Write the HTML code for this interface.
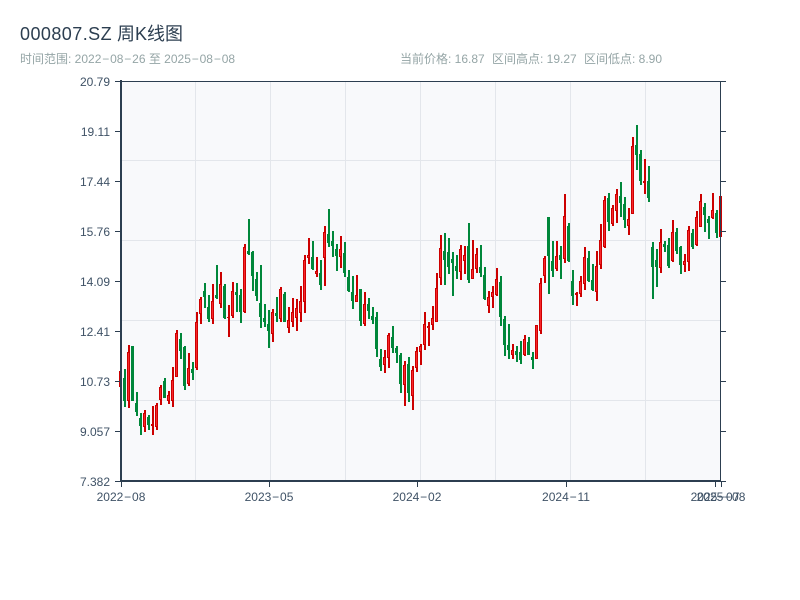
<!DOCTYPE html>
<html lang="zh">
<head>
<meta charset="utf-8">
<title>000807.SZ 周K线图</title>
<style>
html,body{margin:0;padding:0;background:#fff;width:800px;height:600px;overflow:hidden}
svg{display:block;position:absolute;left:0;top:0}
text{font-family:"Liberation Sans","WenQuanYi Zen Hei","Noto Sans CJK SC",sans-serif}
</style>
</head>
<body>
<svg width="800" height="600" viewBox="0 0 800 600" xmlns="http://www.w3.org/2000/svg">
<rect x="121" y="81" width="600" height="400" fill="#f8f9fb"/>
<path d="M195.5 81V481M270.5 81V481M345.5 81V481M420.5 81V481M495.5 81V481M570.5 81V481M645.5 81V481M121 160.5H721M121 240.5H721M121 320.5H721M121 400.5H721" stroke="#e3e6eb" stroke-width="1" fill="none"/>
<g transform="translate(.3,0)" fill="none">
<path stroke="#00873a" stroke-width="2" d="M124.7 369V407M132.7 346V401M136.7 392V416M140.7 413V435M148.7 415V430M164.7 378V398M180.7 333V359M184.7 346V390M192.7 362V380M204.7 283V308M208.7 295V322M216.7 265V299M224.7 284V319M236.7 283V312M240.7 289V323M248.7 219V255M252.7 251V291M256.7 272V301M260.7 265V328M264.7 304V327M268.7 310V348M276.7 297V322M284.7 292V322M312.7 241V270M320.7 260V290M328.7 209V247M332.7 231V257M336.7 244V271M344.7 242V277M348.7 270V292M352.7 276V309M360.7 289V326M368.7 298V319M372.7 307V324M376.7 312V357M380.7 349V371M392.7 326V353M396.7 346V363M400.7 353V393M408.7 357V402M444.7 233V285M448.7 238V274M452.7 252V296M456.7 255V279M468.7 223V283M480.7 245V277M484.7 267V300M500.7 276V326M504.7 316V356M508.7 324V359M516.7 346V362M520.7 341V364M528.7 337V355M532.7 352V369M548.7 217V294M552.7 241V277M560.7 246V279M568.7 223V262M572.7 270V305M588.7 251V282M592.7 264V291M608.7 193V231M620.7 182V217M624.7 197V228M636.7 125V170M640.7 150V185M648.7 166V202M652.7 242V299M656.7 249V287M664.7 241V252M668.7 238V268M676.7 228V254M680.7 246V274M692.7 229V249M704.7 203V232M708.7 216V239M716.7 210V238"/>
<path stroke="#cc0000" stroke-width="2" d="M119.7 371V387M128.7 345V408M144.7 410V432M152.7 406V435M156.7 403V430M160.7 385V405M168.7 391V404M172.7 367V407M176.7 330V377M188.7 353V386M196.7 312V370M200.7 297V324M212.7 284V324M220.7 272V308M228.7 305V337M232.7 282V318M244.7 244V313M272.7 309V342M280.7 287V322M288.7 307V333M292.7 298V327M296.7 299V331M300.7 286V322M304.7 255V313M308.7 238V264M316.7 257V277M324.7 226V286M340.7 236V268M356.7 275V302M364.7 292V326M384.7 350V373M388.7 333V368M404.7 361V406M412.7 366V410M416.7 347V372M420.7 344V365M424.7 312V350M428.7 322V346M432.7 306V330M436.7 273V322M440.7 235V285M460.7 245V280M464.7 246V274M472.7 240V279M476.7 248V273M488.7 291V313M492.7 286V308M496.7 268V296M512.7 344V359M524.7 335V356M536.7 325V359M540.7 278V334M544.7 256V283M556.7 241V271M564.7 194V263M576.7 292V306M580.7 276V297M584.7 247V290M596.7 251V301M600.7 224V269M604.7 196V248M612.7 205V226M616.7 189V223M628.7 208V235M632.7 137V214M644.7 159V194M660.7 229V273M672.7 220V262M684.7 254V272M688.7 226V271M696.7 211V246M700.7 194V227M712.7 193V219M720.7 196V237"/>
</g>
<g transform="translate(-.2,0)" fill="none">
<path stroke="#00873a" stroke-width="3" d="M124.7 378V401M132.7 346V401M136.7 403V412M140.7 418V426M148.7 417V425M164.7 381V398M180.7 339V351M184.7 347V386M192.7 369V373M204.7 291V297M208.7 307V319M216.7 295V298M224.7 286V318M236.7 292V295M240.7 295V312M248.7 251V254M252.7 252V276M256.7 279V296M260.7 303V317M264.7 318V322M268.7 324V331M276.7 313V316M284.7 294V322M312.7 257V269M320.7 273V285M328.7 234V243M332.7 241V246M336.7 249V256M344.7 253V273M348.7 277V291M352.7 292V301M360.7 289V321M368.7 304V311M372.7 316V320M376.7 317V349M380.7 359V367M392.7 337V348M396.7 348V353M400.7 355V384M408.7 364V393M444.7 251V260M448.7 252V267M452.7 259V263M456.7 266V271M468.7 246V280M480.7 267V273M484.7 275V299M500.7 282V317M504.7 319V345M508.7 345V350M516.7 351V355M520.7 352V360M528.7 342V355M532.7 357V360M548.7 217V256M552.7 261V271M560.7 255V260M568.7 226V261M572.7 281V296M588.7 258V281M592.7 280V290M608.7 198V222M620.7 196V203M624.7 204V220M636.7 145V155M640.7 154V181M648.7 181V198M652.7 247V267M656.7 260V267M664.7 244V247M668.7 245V266M676.7 232V251M680.7 247V265M692.7 233V247M704.7 207V215M708.7 219V223M716.7 213V233"/>
<path stroke="#cc0000" stroke-width="3" d="M128.7 352V401M144.7 413V427M152.7 424V426M156.7 405V427M160.7 387V400M168.7 395V401M172.7 380V401M176.7 333V377M188.7 368V384M196.7 322V368M200.7 299V314M212.7 301V319M220.7 284V304M228.7 317V318M232.7 291V316M244.7 247V312M272.7 312V334M280.7 289V319M288.7 320V328M292.7 312V322M296.7 308V318M300.7 301V313M304.7 260V302M308.7 255V258M316.7 271V274M324.7 232V258M340.7 249V257M356.7 295V302M364.7 304V324M384.7 357V365M388.7 335V358M404.7 365V385M412.7 370V396M416.7 351V368M420.7 346V352M424.7 324V345M428.7 326V328M432.7 318V325M436.7 288V322M440.7 248V278M460.7 249V272M464.7 255V261M472.7 269V279M476.7 254V269M488.7 297V306M492.7 292V297M496.7 279V295M512.7 350V355M524.7 339V355M536.7 325V359M540.7 283V331M544.7 258V276M556.7 256V269M564.7 216V259M576.7 293V295M580.7 281V294M584.7 257V284M596.7 266V292M600.7 240V265M604.7 200V247M612.7 208V224M616.7 194V211M628.7 219V226M632.7 146V214M644.7 181V183M660.7 242V268M672.7 232V261M684.7 261V265M688.7 230V262M696.7 217V245M700.7 201V227M712.7 210V218M720.7 196V237"/>
<path stroke="#f8262b" stroke-width="1" d="M128.7 353V400M144.7 414V426M156.7 406V426M160.7 388V399M168.7 396V400M172.7 381V400M176.7 334V376M188.7 369V383M196.7 323V367M200.7 300V313M212.7 302V318M220.7 285V303M232.7 292V315M244.7 248V311M272.7 313V333M280.7 290V318M288.7 321V327M292.7 313V321M296.7 309V317M300.7 302V312M304.7 261V301M308.7 256V257M316.7 272V273M324.7 233V257M340.7 250V256M356.7 296V301M364.7 305V323M384.7 358V364M388.7 336V357M404.7 366V384M412.7 371V395M416.7 352V367M420.7 347V351M424.7 325V344M428.7 327V327.5M432.7 319V324M436.7 289V321M440.7 249V277M460.7 250V271M464.7 256V260M472.7 270V278M476.7 255V268M488.7 298V305M492.7 293V296M496.7 280V294M512.7 351V354M524.7 340V354M536.7 326V358M540.7 284V330M544.7 259V275M556.7 257V268M564.7 217V258M580.7 282V293M584.7 258V283M596.7 267V291M600.7 241V264M604.7 201V246M612.7 209V223M616.7 195V210M628.7 220V225M632.7 147V213M660.7 243V267M672.7 233V260M684.7 262V264M688.7 231V261M696.7 218V244M700.7 202V226M712.7 211V217"/>
</g>
<g fill="none" stroke="#2c3e50">
<path stroke-width="2" d="M121 80V482M120 481H721"/>
<path stroke-width="1" d="M120 81.5H721M720.5 81V481"/>
<path stroke-width="1" d="M115 81.5H120M115 131.5H120M115 181.5H120M115 231.5H120M115 281.5H120M115 331.5H120M115 381.5H120M115 431.5H120M115 481.5H120"/>
<path stroke-width="1" d="M721 81.5H726M721 131.5H726M721 181.5H726M721 231.5H726M721 281.5H726M721 331.5H726M721 381.5H726M721 431.5H726M721 481.5H726"/>
<path stroke-width="1" d="M121.5 482V487M269.5 482V487M417.5 482V487M566.5 482V487M715.5 482V487M721.5 482V487"/>
</g>
<text x="20" y="40" font-size="18" fill="#2c3e50"><tspan letter-spacing=".44">000807.SZ</tspan> 周K线图</text>
<text x="20" y="63" font-size="12" fill="#95a5a6">时间范围: 2022<tspan dx=".85">−</tspan><tspan dx=".85">08</tspan><tspan dx=".85">−</tspan><tspan dx=".85">26</tspan> 至 2025<tspan dx=".85">−</tspan><tspan dx=".85">08</tspan><tspan dx=".85">−</tspan><tspan dx=".85">08</tspan></text>
<text x="400" y="63" font-size="12" fill="#95a5a6">当前价格: 16.87</text>
<text x="492" y="63" font-size="12" fill="#95a5a6">区间高点: 19.27</text>
<text x="584" y="63" font-size="12" fill="#95a5a6">区间低点: 8.90</text>
<g font-size="12" fill="#3f5266" text-anchor="end">
<text x="110" y="86">20.79</text>
<text x="110" y="136">19.11</text>
<text x="110" y="186">17.44</text>
<text x="110" y="236">15.76</text>
<text x="110" y="286">14.09</text>
<text x="110" y="336">12.41</text>
<text x="110" y="386">10.73</text>
<text x="110" y="436">9.057</text>
<text x="110" y="486">7.382</text>
</g>
<g font-size="12" fill="#3f5266" text-anchor="middle">
<text x="121" y="501">2022<tspan dx=".85">−</tspan><tspan dx=".85">08</tspan></text>
<text x="269" y="501">2023<tspan dx=".85">−</tspan><tspan dx=".85">05</tspan></text>
<text x="417" y="501">2024<tspan dx=".85">−</tspan><tspan dx=".85">02</tspan></text>
<text x="566" y="501">2024<tspan dx=".85">−</tspan><tspan dx=".85">11</tspan></text>
<text x="715" y="501">2025<tspan dx=".85">−</tspan><tspan dx=".85">07</tspan></text>
<text x="721" y="501">2025<tspan dx=".85">−</tspan><tspan dx=".85">08</tspan></text>
</g>
</svg>
</body>
</html>
